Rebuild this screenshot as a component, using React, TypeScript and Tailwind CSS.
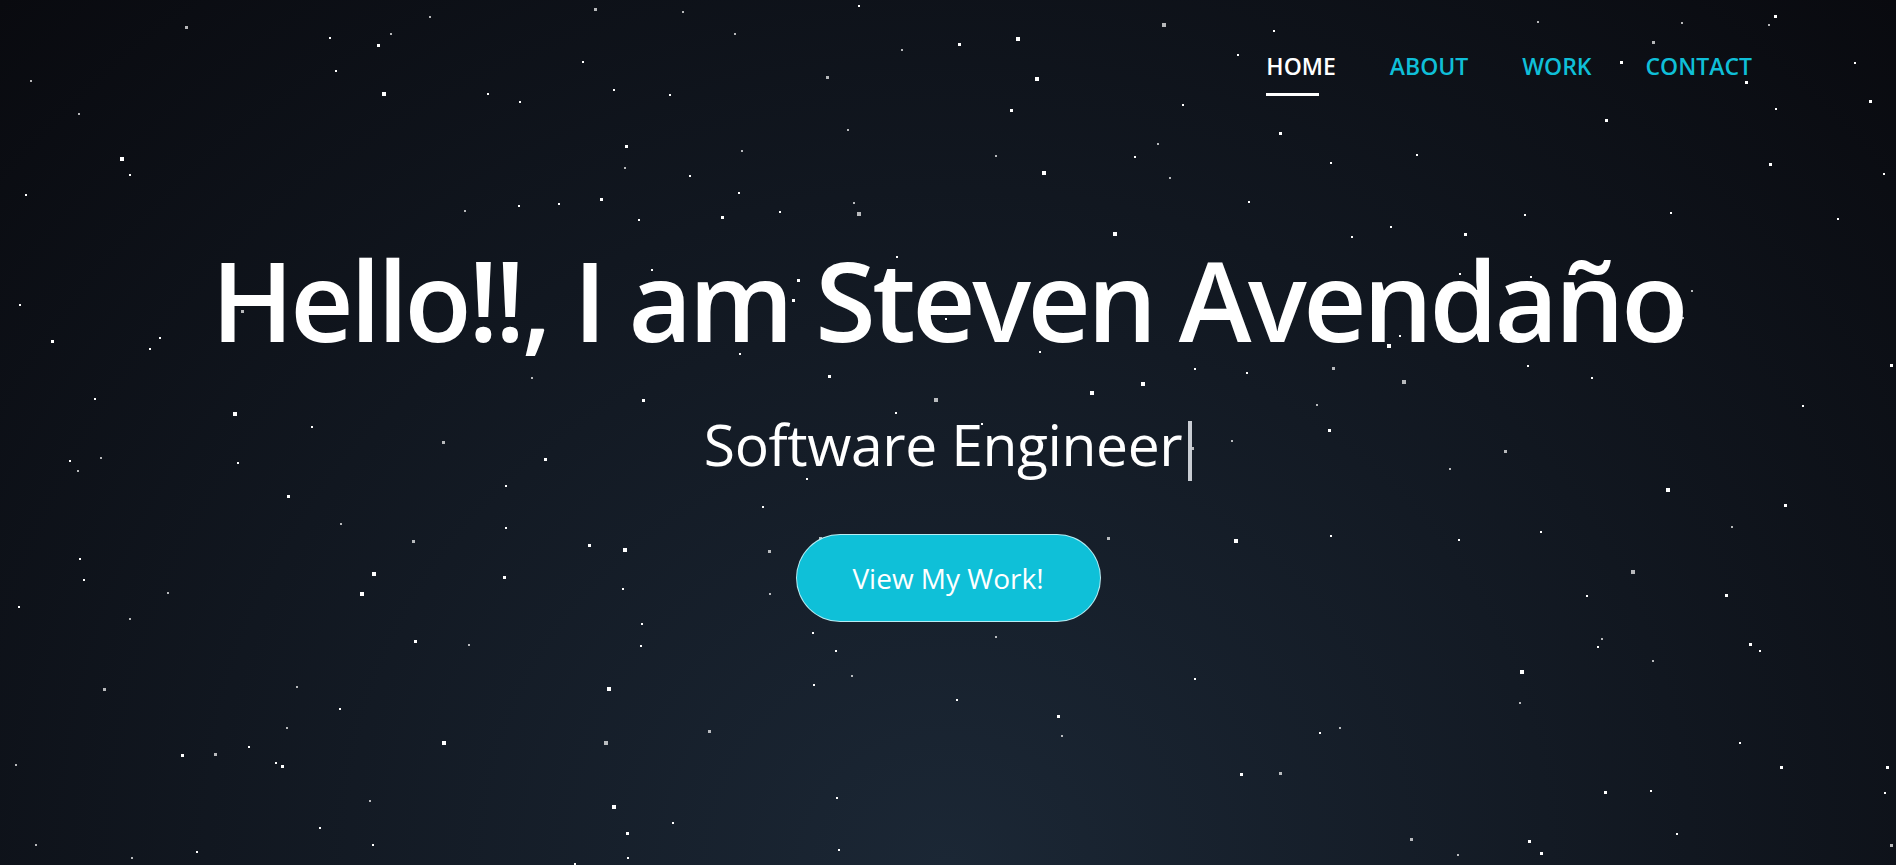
import React from "react";

// deterministic pseudo-random so the sky is the same every render
function makeStars(count: number, seed: number) {
  let s = seed;
  const rand = () => {
    s = (s * 16807) % 2147483647;
    return (s - 1) / 2147483646;
  };
  return Array.from({ length: count }, () => {
    const r = rand();
    return {
      x: rand() * 100,
      y: rand() * 100,
      size: r < 0.6 ? 2 : r < 0.88 ? 3 : 4,
      dim: rand() < 0.3,
    };
  });
}

const stars = makeStars(230, 42);

const links = ["HOME", "ABOUT", "WORK", "CONTACT"];

export default function App() {
  return (
    <div
      className="relative h-[865px] w-full overflow-hidden bg-[radial-gradient(ellipse_at_bottom,#1b2735_0%,#090a0f_100%)]"
      style={{ fontFamily: '"Open Sans", "Noto Sans", sans-serif' }}
    >
      {/* stars */}
      <div className="pointer-events-none absolute inset-0">
        {stars.map((st, i) => (
          <span
            key={i}
            className={st.dim ? "absolute bg-white/70" : "absolute bg-white"}
            style={{
              left: `${st.x}%`,
              top: `${st.y}%`,
              width: st.size,
              height: st.size,
            }}
          />
        ))}
      </div>

      <nav className="relative flex justify-end pt-[52px] pr-[144px]">
        <ul className="flex gap-x-[54px]">
          {links.map((l, i) => (
            <li key={l} className="flex flex-col">
              <a
                href="#"
                className={
                  i === 0
                    ? "text-[23px] leading-[28px] font-semibold text-white"
                    : "text-[23px] leading-[28px] font-semibold text-[#0fbfd8]"
                }
              >
                {l}
              </a>
              {i === 0 && <span className="mt-[13px] h-[3px] w-[53px] bg-white" />}
            </li>
          ))}
        </ul>
      </nav>

      <main className="relative flex flex-col items-center pt-[138px]">
        <h1 className="text-[110px] leading-[130px] font-semibold tracking-[-3.5px] text-white">
          Hello!!, I am Steven Avendaño
        </h1>
        <h2 className="mt-[44px] flex items-start text-[57px] leading-[72px] font-normal tracking-[-0.4px] text-white">
          Software Engineer
          <span className="mt-[13px] ml-[6px] inline-block h-[60px] w-[4px] bg-[#c9cdd3]" />
        </h2>
        <button className="mt-[53px] h-[88px] w-[305px] rounded-full border border-white/70 bg-[#0fc0d8] text-[28px] text-white">
          View My Work!
        </button>
      </main>
    </div>
  );
}
